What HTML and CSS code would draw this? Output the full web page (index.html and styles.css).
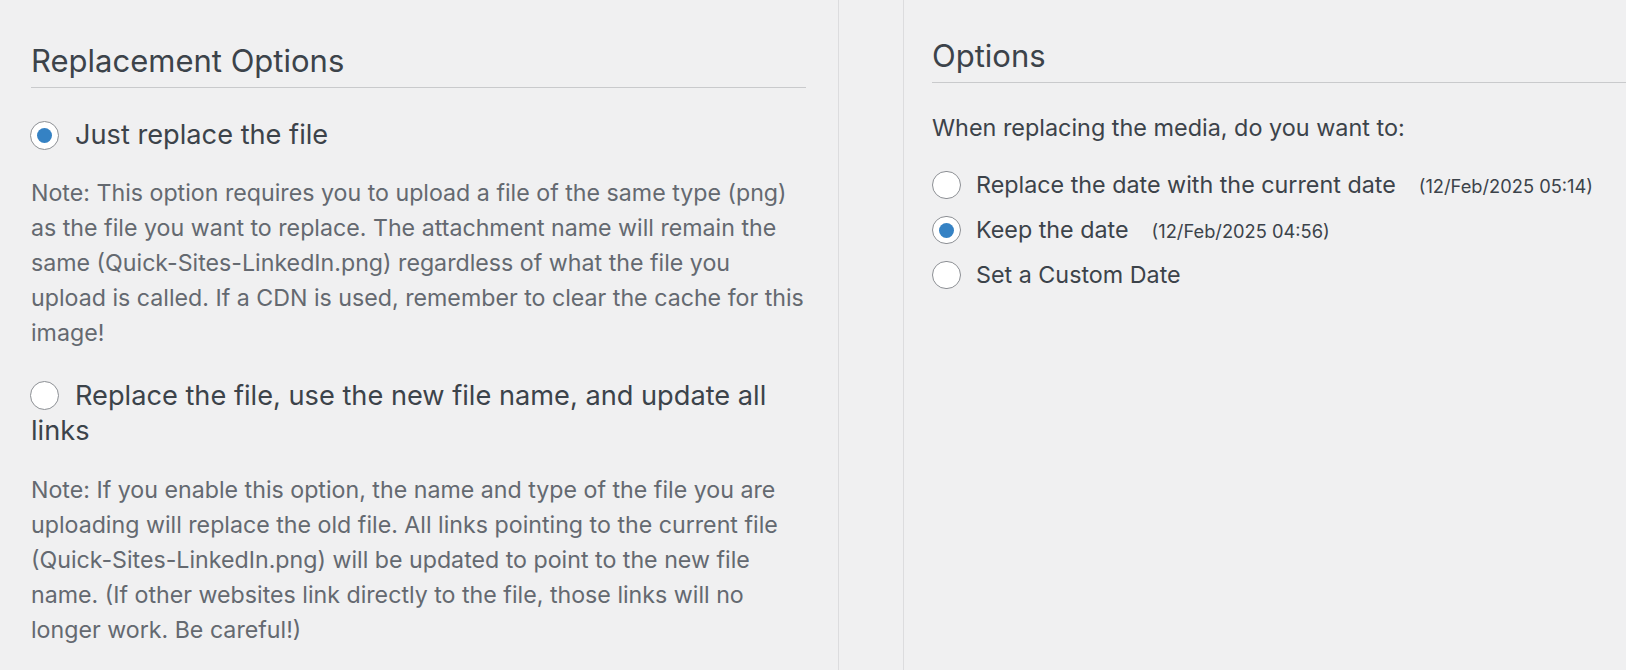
FILE: index.html
```html
<!DOCTYPE html>
<html lang="en">
<head>
<meta charset="utf-8">
<title>Replace Media</title>
<link rel="stylesheet" href="styles.css">
</head>
<body>
<div class="wrap">
  <section class="left">
    <h2 class="title">Replacement Options</h2>
    <label class="choice"><span class="radio checked"></span>Just replace the file</label>
    <p class="note">Note: This option requires you to upload a file of the same type (png) as the file you want to replace. The attachment name will remain the same (Quick-Sites-LinkedIn.png) regardless of what the file you upload is called. If a CDN is used, remember to clear the cache for this image!</p>
    <label class="choice choice-2"><span class="radio"></span>Replace the file, use the new file name, and update all links</label>
    <p class="note note-2">Note: If you enable this option, the name and type of the file you are uploading will replace the old file. All links pointing to the current file (Quick-Sites-LinkedIn.png) will be updated to point to the new file name. (If other websites link directly to the file, those links will no longer work. Be careful!)</p>
  </section>
  <section class="right">
    <h2 class="title title-right">Options</h2>
    <p class="intro">When replacing the media, do you want to:</p>
    <ul class="dates">
      <li><span class="radio"></span>Replace the date with the current date<small class="stamp">(12/Feb/2025 05:14)</small></li>
      <li><span class="radio checked"></span>Keep the date<small class="stamp">(12/Feb/2025 04:56)</small></li>
      <li><span class="radio"></span>Set a Custom Date</li>
    </ul>
  </section>
</div>
</body>
</html>
```
FILE: styles.css
```css
html, body {
  margin: 0;
  padding: 0;
  background: #f0f0f1;
}
body {
  font-family: Inter, "Noto Sans", sans-serif;
  color: #3c434a;
  height: 670px;
  overflow: hidden;
}
.wrap {
  display: flex;
  height: 670px;
}
.left {
  width: 775px;
  padding: 0 32px 0 31px;
  border-right: 1px solid #dcdcde;
  flex: none;
}
.right {
  flex: 1;
  margin-left: 64px;
  padding-left: 28px;
  border-left: 1px solid #dcdcde;
}
.title {
  font-size: 31px;
  font-weight: 400;
  line-height: 41.6px;
  margin: 39.5px 0 0;
  padding-bottom: 6px;
  border-bottom: 1px solid #c9cacc;
  color: #3c434a;
}
.title-right {
  margin-top: 34.5px;
}
.choice {
  display: block;
  font-size: 27.2px;
  line-height: 35.5px;
  margin-top: 29px;
  color: #3c434a;
}
.choice-2 {
  margin-top: 27px;
}
.radio {
  display: inline-block;
  box-sizing: border-box;
  width: 29px;
  height: 29px;
  border: 1.5px solid #8c8f94;
  border-radius: 50%;
  background: #fff;
  margin: 0 16px 0 -1px;
  vertical-align: -5.5px;
  position: relative;
}
.radio.checked::after {
  content: "";
  position: absolute;
  left: 50%;
  top: 50%;
  width: 15px;
  height: 15px;
  margin: -7.5px 0 0 -7.5px;
  border-radius: 50%;
  background: #3582c4;
}
.note {
  font-size: 23.2px;
  line-height: 35px;
  color: #646970;
  margin: 23px 0 0;
}
.note-2 {
  margin-top: 24px;
}
.intro {
  font-size: 23.4px;
  line-height: 35px;
  margin: 27px 0 0;
  color: #3c434a;
}
.dates {
  list-style: none;
  margin: 17.5px 0 0;
  padding: 0;
  font-size: 23.3px;
  line-height: 44px;
}
.dates .radio {
  width: 28.5px;
  height: 28.5px;
  vertical-align: -6.7px;
  margin-left: 0;
  margin-right: 15.5px;
}
.stamp {
  font-size: 18.3px;
  margin-left: 23px;
}
```
